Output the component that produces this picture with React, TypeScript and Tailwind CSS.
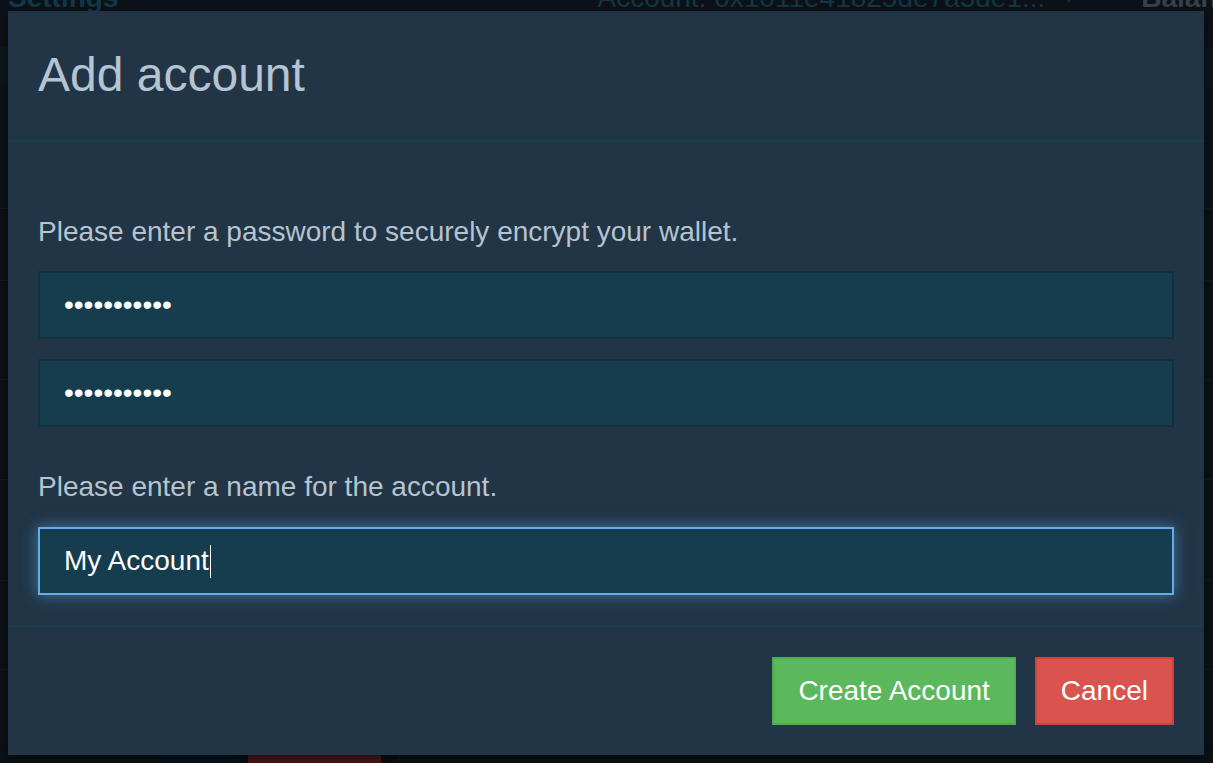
import React from 'react';

const font = "font-['Liberation_Sans',Arial,Helvetica,sans-serif]";

const BackgroundApp: React.FC = () => {
  return (
    <div className="flex h-full w-full flex-col bg-[#0b1117]">
      {/* top nav, mostly hidden behind the dialog */}
      <div className="relative h-[48px] overflow-hidden bg-[#0c1218]">
        <div className="-mt-[18px] flex items-start whitespace-nowrap text-[28px] leading-[32px]">
          <span className="ml-[8px] shrink-0 font-bold text-[#123a4a]">Settings</span>
          <span className="ml-[479px] flex shrink-0 items-center text-[#123848]">
            Account: 0x1011e41825de7a5de1...
            <span className="ml-[16px] text-[16px] text-[#123848]">▼</span>
          </span>
          <span className="ml-[64px] shrink-0 font-bold text-[#3a4148]">Balance</span>
        </div>
      </div>
      <div className="h-[40px] bg-[#0e181f]" />
      <div className="h-[124px] border-b border-[#131c23] bg-[#0c151b]" />
      <div className="h-[73px] border-b border-[#131c23] bg-[#0b1217]" />
      <div className="h-[101px] border-b border-[#131c23] bg-[#0b1217]" />
      <div className="h-[102px] border-b border-[#131c23] bg-[#0b1217]" />
      <div className="h-[102px] border-b border-[#131c23] bg-[#0b1217]" />
      <div className="h-[91px] border-b border-[#131c23] bg-[#0b1217]" />
      <div className="h-[74px] bg-[#0b1217]" />
      <div className="flex h-[20px]">
        <div className="w-[156px] bg-[#0b1115]" />
        <div className="w-[82px] bg-[#07141a]" />
        <div className="w-[10px] bg-[#0a1015]" />
        <div className="w-[133px] bg-[#4a1b1c]" />
        <div className="w-[17px] bg-[#0a1015]" />
        <div className="w-px bg-[#141c22]" />
        <div className="flex-1 bg-[#0b1116]" />
      </div>
    </div>
  );
};

const App: React.FC = () => {
  return (
    <div className={`relative h-[763px] w-full overflow-hidden ${font}`}>
      <BackgroundApp />

      <div className="absolute left-[8px] top-[11px] w-[1196px] bg-[#213547] shadow-[0_5px_15px_rgba(0,0,0,0.5)]">
        <div className="h-[131px] border-b-2 border-[#1b3d50] px-[30px] pt-[38px]">
          <h4 className="text-[48px] leading-[1.1] font-normal text-[#b4c4d0]">Add account</h4>
        </div>

        <div className="px-[30px] pt-[70px] pb-[30px]">
          <p className="mb-[19px] text-[28px] leading-[40px] text-[#b6c4ce]">
            Please enter a password to securely encrypt your wallet.
          </p>
          <input
            type="password"
            readOnly
            value="abcdefghijk"
            className="mb-[20px] block h-[68px] w-full border-2 border-[#12303f] bg-[#153d4e] px-[24px] text-[28px] text-white outline-none"
          />
          <input
            type="password"
            readOnly
            value="abcdefghijk"
            className="mb-[40px] block h-[68px] w-full border-2 border-[#12303f] bg-[#153d4e] px-[24px] text-[28px] text-white outline-none"
          />
          <p className="mb-[20px] text-[28px] leading-[40px] text-[#b6c4ce]">
            Please enter a name for the account.
          </p>
          <div
            role="textbox"
            className="flex h-[68px] w-full items-center border-2 border-[#62aceb] bg-[#153d4e] px-[24px] text-[28px] text-white shadow-[0_0_14px_rgba(102,175,233,0.55)]"
          >
            <span>My Account</span>
            <span className="ml-px h-[33px] w-px bg-white" />
          </div>
        </div>

        <div className="flex justify-end gap-[19px] border-t-2 border-[#1b3d50] px-[30px] pt-[30px] pb-[30px]">
          <button className="h-[68px] border-2 border-[#4cae4c] bg-[#5cb85c] px-[24px] text-[28px] text-white">
            Create Account
          </button>
          <button className="h-[68px] border-2 border-[#d43f3a] bg-[#d9534f] px-[24px] text-[28px] text-white">
            Cancel
          </button>
        </div>
      </div>
    </div>
  );
};

export default App;
